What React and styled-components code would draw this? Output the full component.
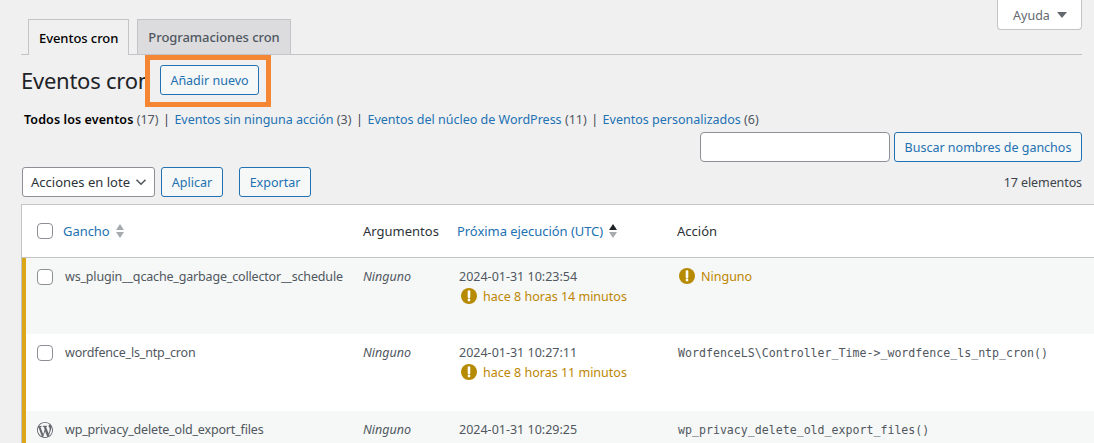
import React from "react";
import styled, { createGlobalStyle } from "styled-components";

const GlobalStyle = createGlobalStyle`
  html, body {
    margin: 0;
    padding: 0;
    height: 100%;
    background: #f0f0f1;
    overflow: hidden;
  }
  body {
    font-family: "Noto Sans", "Open Sans", sans-serif;
    font-size: 12.5px;
    color: #3c434a;
  }
`;

const Page = styled.div`
  position: relative;
  width: 1094px;
  height: 443px;
  overflow: hidden;
  padding: 0 12px 0 21px;
  box-sizing: border-box;
`;

const HelpLink = styled.button`
  position: absolute;
  top: -1px;
  right: 12px;
  width: 85px;
  height: 31px;
  background: #fff;
  border: 1px solid #c3c4c7;
  border-top: 0;
  border-radius: 0 0 4px 4px;
  font: inherit;
  font-size: 12.5px;
  color: #646970;
  display: flex;
  align-items: center;
  justify-content: center;
  gap: 7px;
  padding: 2px 0 0 1px;
  &::after {
    content: "";
    border-style: solid;
    border-width: 6px 5px 0;
    border-color: #646970 transparent transparent;
  }
`;

const TabBar = styled.nav`
  display: flex;
  gap: 8px;
  box-sizing: border-box;
  padding: 19px 0 0 7px;
  height: 55px;
  border-bottom: 1px solid #c3c4c7;
`;

const Tab = styled.a`
  height: 36px;
  box-sizing: border-box;
  padding: 0 10px;
  display: flex;
  align-items: center;
  font-size: 13px;
  font-weight: 500;
  letter-spacing: -0.06px;
  border: 1px solid #c3c4c7;
  border-bottom: ${(p) => (p.$active ? "0" : "1px solid #c3c4c7")};
  background: ${(p) => (p.$active ? "#f0f0f1" : "#dcdcde")};
  color: ${(p) => (p.$active ? "#000" : "#50575e")};
`;

const TitleRow = styled.div`
  display: flex;
  align-items: center;
  height: 30px;
  margin-top: 10px;
`;

const Title = styled.h1`
  margin: 0;
  width: 139px;
  flex: none;
  font-size: 22px;
  letter-spacing: -0.25px;
  font-weight: 400;
  line-height: 30px;
  color: #1d2327;
  white-space: nowrap;
`;

const Outline = styled.a`
  display: inline-flex;
  align-items: center;
  justify-content: center;
  box-sizing: border-box;
  height: 30px;
  width: ${(p) => p.$w}px;
  flex: none;
  background: #f6f7f7;
  border: 1px solid #2271b1;
  border-radius: 3px;
  color: #2271b1;
  white-space: nowrap;
`;

const Highlight = styled.div`
  position: absolute;
  left: 145px;
  top: 55px;
  width: 126px;
  height: 52px;
  box-sizing: border-box;
  border: 5px solid #f58634;
`;

const Filters = styled.div`
  height: 20px;
  line-height: 20px;
  margin-top: 15px;
  padding-left: 3px;
  white-space: pre;
`;

const Current = styled.span`
  letter-spacing: 0.1px;
  font-weight: 600;
  color: #000;
`;

const Count = styled.span`
  color: #50575e;
`;

const Separator = styled.span`
  margin: 0 1.25px;
`;

const FilterLink = styled.a`
  color: #2271b1;
`;

const SearchRow = styled.div`
  display: flex;
  justify-content: flex-end;
  gap: 4px;
  margin-top: 2px;
`;

const SearchInput = styled.input`
  width: 190px;
  height: 30px;
  box-sizing: border-box;
  background: #fff;
  border: 1px solid #8c8f94;
  border-radius: 4px;
`;

const TableNav = styled.div`
  display: flex;
  align-items: center;
  height: 30px;
  margin-top: 5px;
  padding-left: 1px;
`;

const BulkSelect = styled.div`
  width: 133px;
  height: 30px;
  box-sizing: border-box;
  display: flex;
  align-items: center;
  justify-content: space-between;
  padding: 0 6px 0 8px;
  background: #fff;
  border: 1px solid #8c8f94;
  border-radius: 3px;
  font-size: 13px;
  color: #2c3338;
  margin-right: 6px;
`;

const Spacer = styled.div`
  width: ${(p) => p.$w}px;
`;

const ItemCount = styled.div`
  margin-left: auto;
  letter-spacing: -0.1px;
  color: #3c434a;
`;

const Table = styled.div`
  margin-top: 7px;
  width: 1090px;
  background: #fff;
  border: 1px solid #c3c4c7;
`;

const HeadRow = styled.div`
  display: grid;
  grid-template-columns: 26px 300px 94px 220px 1fr;
  align-items: center;
  height: 52px;
  padding-left: 15px;
  border-bottom: 1px solid #c3c4c7;
  font-size: 13px;
  color: #2c3338;
`;

const Row = styled.div`
  display: grid;
  grid-template-columns: 28px 298px 96px 218px 1fr;
  height: ${(p) => p.$h}px;
  box-sizing: border-box;
  padding: 11px 0 0 11px;
  border-left: 4px solid #dba617;
  background: ${(p) => (p.$alt ? "#f6f7f7" : "#fff")};
`;

const Checkbox = styled.span`
  display: block;
  width: 16px;
  height: 16px;
  box-sizing: border-box;
  background: #fff;
  border: 1px solid #8c8f94;
  border-radius: 4px;
`;

const SortLink = styled.a`
  display: inline-flex;
  align-items: center;
  gap: 6px;
  letter-spacing: -0.05px;
  color: #2271b1;
`;

const SortArrows = styled.span`
  display: inline-flex;
  flex-direction: column;
  gap: 2px;
  &::before,
  &::after {
    content: "";
    border-style: solid;
    border-color: transparent;
    border-width: 0 4.5px;
  }
  &::before {
    border-bottom: 6px solid ${(p) => (p.$active ? "#1d2327" : "#a7aaad")};
  }
  &::after {
    border-width: 6px 4.5px 0;
    border-top-color: #a7aaad;
  }
`;

const HookName = styled.div`
  color: #50575e;
  line-height: 16px;
  letter-spacing: -0.17px;
`;

const NoArgs = styled.div`
  font-style: italic;
  color: #50575e;
  line-height: 16px;
`;

const NextRun = styled.div`
  color: #50575e;
  line-height: 16px;
`;

const Late = styled.div`
  display: flex;
  align-items: center;
  gap: 6px;
  margin: ${(p) => (p.$inline ? "-1px 0 0 2px" : "4px 0 0 2px")};
  color: #bd8600;
  height: 16px;
  svg {
    flex: none;
    margin-bottom: ${(p) => (p.$inline ? 0 : 2)}px;
  }
`;

const Code = styled.code`
  font-family: "DejaVu Sans Mono", monospace;
  font-size: 11.6px;
  line-height: 16px;
  margin-left: 1px;
  color: #50575e;
`;

const WarnIcon = () => (
  <svg width="16" height="16" viewBox="0 0 16 16">
    <circle cx="8" cy="8" r="8" fill="#b78a04" />
    <path d="M8 3.500v5.500" stroke="#fff" strokeWidth="2.600" strokeLinecap="round" />
    <circle cx="8" cy="12" r="1.400" fill="#fff" />
  </svg>
);

const WpIcon = () => (
  <svg width="16" height="16" viewBox="0 0 20 20" fill="#646970">
    <path d="M20 10c0-5.51-4.49-10-10-10C4.480 0 0 4.490 0 10c0 5.520 4.480 10 10 10 5.510 0 10-4.480 10-10zM7.780 15.370L4.370 6.220c.550-.020 1.170-.080 1.170-.080.500-.060.440-1.130-.060-1.110 0 0-1.450.110-2.370.110-.180 0-.370 0-.580-.010C4.120 2.690 6.890 1.050 10 1.050c2.320 0 4.430.890 6.010 2.340-.670-.110-1.620.390-1.620 1.560 0 .730.440 1.340.890 2.070.350.610.550 1.360.550 2.460 0 1.490-1.400 5-1.400 5l-3.030-8.370c.540-.020.820-.170.820-.170.500-.050.440-1.250-.060-1.220 0 0-1.440.120-2.380.120-.870 0-2.330-.120-2.330-.120-.500-.030-.560 1.200-.060 1.220l.920.080 1.260 3.410zM17.410 10c.240-.640.740-1.870.430-4.250.700 1.290 1.050 2.710 1.050 4.250 0 3.290-1.730 6.240-4.400 7.780.970-2.590 1.940-5.200 2.920-7.780zM6.100 18.090C3.120 16.650 1.110 13.530 1.110 10c0-1.300.230-2.480.720-3.590C3.250 10.300 4.670 14.200 6.100 18.090zm4.030-6.630l2.580 6.980c-.850.290-1.780.450-2.710.450-.790 0-1.570-.110-2.290-.330.810-2.380 1.620-4.740 2.420-7.100z" />
  </svg>
);

const Chevron = () => (
  <svg width="14" height="14" viewBox="0 0 14 14" fill="none" stroke="#50575e" strokeWidth="1.6">
    <path d="M2.500 4.800L7 9.200l4.500-4.400" />
  </svg>
);

export default function App() {
  return (
    <Page>
      <GlobalStyle />
      <HelpLink>Ayuda</HelpLink>
      <TabBar>
        <Tab $active>Eventos cron</Tab>
        <Tab>Programaciones cron</Tab>
      </TabBar>
      <TitleRow>
        <Title>Eventos cron</Title>
        <Outline $w={99}>Añadir nuevo</Outline>
      </TitleRow>
      <Highlight />
      <Filters>
        <Current>Todos los eventos</Current> <Count>(17)</Count> <Separator>|</Separator> <FilterLink>Eventos sin ninguna acción</FilterLink> <Count>(3)</Count> <Separator>|</Separator> <FilterLink>Eventos del núcleo de WordPress</FilterLink> <Count>(11)</Count> <Separator>|</Separator> <FilterLink>Eventos personalizados</FilterLink> <Count>(6)</Count>
      </Filters>
      <SearchRow>
        <SearchInput />
        <Outline $w={188}>Buscar nombres de ganchos</Outline>
      </SearchRow>
      <TableNav>
        <BulkSelect>Acciones en lote <Chevron /></BulkSelect>
        <Outline $w={62}>Aplicar</Outline>
        <Spacer $w={16} />
        <Outline $w={72}>Exportar</Outline>
        <ItemCount>17 elementos</ItemCount>
      </TableNav>
      <Table>
        <HeadRow>
          <Checkbox />
          <SortLink>Gancho <SortArrows /></SortLink>
          <span>Argumentos</span>
          <SortLink>Próxima ejecución (UTC) <SortArrows $active /></SortLink>
          <span>Acción</span>
        </HeadRow>
        <Row $alt $h={76}>
          <Checkbox />
          <HookName>ws_plugin__qcache_garbage_collector__schedule</HookName>
          <NoArgs>Ninguno</NoArgs>
          <NextRun>
            2024-01-31 10:23:54
            <Late><WarnIcon />hace 8 horas 14 minutos</Late>
          </NextRun>
          <Late $inline><WarnIcon />Ninguno</Late>
        </Row>
        <Row $h={77}>
          <Checkbox />
          <HookName>wordfence_ls_ntp_cron</HookName>
          <NoArgs>Ninguno</NoArgs>
          <NextRun>
            2024-01-31 10:27:11
            <Late><WarnIcon />hace 8 horas 11 minutos</Late>
          </NextRun>
          <Code>WordfenceLS\Controller_Time-&gt;_wordfence_ls_ntp_cron()</Code>
        </Row>
        <Row $alt $h={77}>
          <WpIcon />
          <HookName>wp_privacy_delete_old_export_files</HookName>
          <NoArgs>Ninguno</NoArgs>
          <NextRun>2024-01-31 10:29:25</NextRun>
          <Code>wp_privacy_delete_old_export_files()</Code>
        </Row>
      </Table>
    </Page>
  );
}
